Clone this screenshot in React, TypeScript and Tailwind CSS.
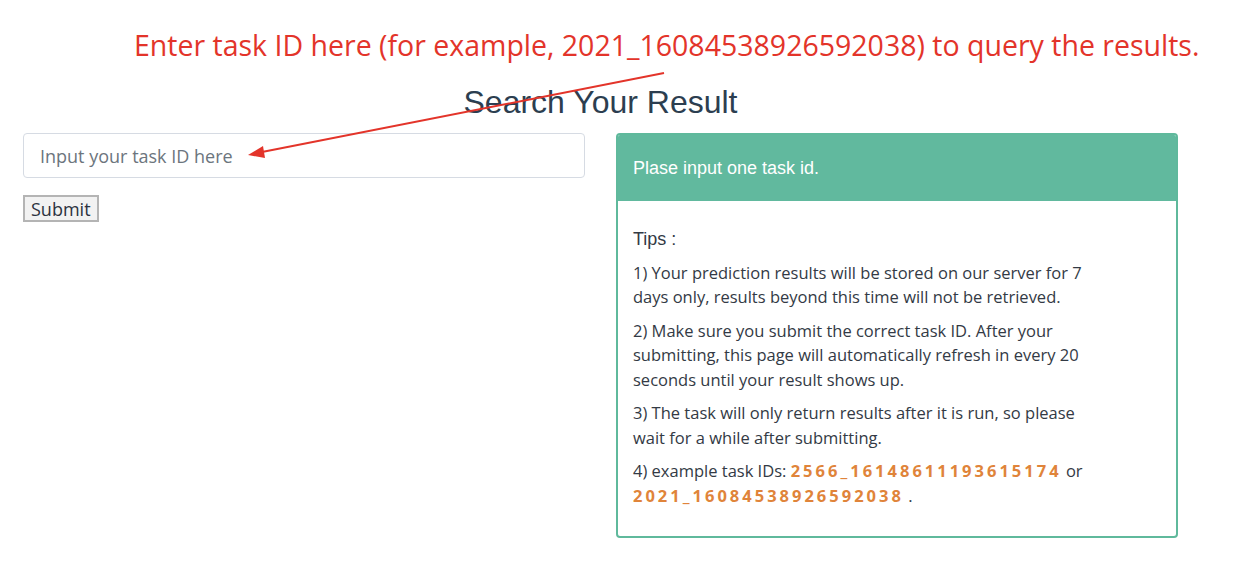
import React, { useState } from 'react';

const tips = [
  '1) Your prediction results will be stored on our server for 7 days only, results beyond this time will not be retrieved.',
  '2) Make sure you submit the correct task ID. After your submitting, this page will automatically refresh in every 20 seconds until your result shows up.',
  '3) The task will only return results after it is run, so please wait for a while after submitting.',
];

const App: React.FC = () => {
  const [taskId, setTaskId] = useState('');

  return (
    <div className="relative min-h-[564px] w-[1242px] bg-white font-['Open_Sans',sans-serif] text-[#333]">
      {/* annotation */}
      <div className="pl-[134px] pt-[26px] text-[28.5px] leading-[38px] text-[#e3342a]">
        Enter task ID here (for example, 2021_16084538926592038) to query the results.
      </div>
      <svg className="pointer-events-none absolute left-0 top-0" width="1242" height="564">
        <line x1="664" y1="73" x2="262" y2="152" stroke="#e3342a" strokeWidth="2" />
        <polygon points="248,155 263,146 265,158" fill="#e3342a" />
      </svg>

      <div className="w-[1178px] pl-[23px]">
        <h2 className="mt-[19px] text-center font-['Liberation_Sans',Arial,sans-serif] text-[32px] leading-[38px] text-[#2c3e50]">
          Search Your Result
        </h2>

        <div className="mt-[12px] flex gap-[31px]">
          <div className="w-[562px]">
            <input
              type="text"
              value={taskId}
              onChange={e => setTaskId(e.target.value)}
              placeholder="Input your task ID here"
              className="h-[45px] w-full rounded-[4px] border border-[#d6dbe3] px-[16px] text-[18px] text-[#495057] placeholder:text-[#6c757d] focus:outline-none"
            />
            <button
              type="button"
              className="mt-[17px] h-[27px] border-2 border-[#b4b4b4] bg-[#f2f2f2] px-[6px] text-[18px] leading-none text-[#2c3340]"
            >
              Submit
            </button>
          </div>

          <div className="h-[405px] w-[562px] overflow-hidden rounded-[4px] border-2 border-[#5fb99c]">
            <div className="flex h-[66px] items-center bg-[#61b99e] px-[15px] font-['Liberation_Sans',Arial,sans-serif] text-[18px] text-white">
              Plase input one task id.
            </div>
            <div className="max-w-[497px] px-[15px] pt-[26px] text-[16.5px] leading-[24.5px] text-[#333a45]">
              <p className="mb-[9px] font-['Liberation_Sans',Arial,sans-serif] text-[18px]">Tips :</p>
              {tips.map(t => (
                <p key={t} className="mb-[9px]">
                  {t}
                </p>
              ))}
              <p>
                4) example task IDs:{' '}
                <span className="font-bold tracking-[3px] text-[#e0843a]">2566_16148611193615174</span> or{' '}
                <span className="font-bold tracking-[3px] text-[#e0843a]">2021_16084538926592038</span> .
              </p>
            </div>
          </div>
        </div>
      </div>
    </div>
  );
};

export default App;
